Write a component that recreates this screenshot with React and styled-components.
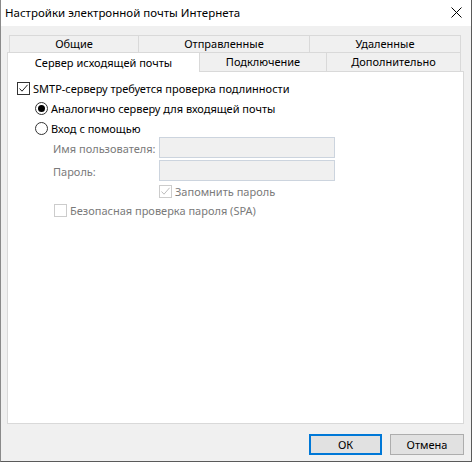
import React from "react";
import styled, { createGlobalStyle } from "styled-components";

const Global = createGlobalStyle`
  html, body {
    margin: 0;
    padding: 0;
    background: #ffffff;
  }
  * {
    box-sizing: border-box;
  }
`;

const Window = styled.div`
  width: 472px;
  height: 462px;
  display: flex;
  flex-direction: column;
  background: #f0f0f0;
  border-left: 1px solid #8a8a8a;
  border-right: 1px solid #5a5a5a;
  border-bottom: 1px solid #5a5a5a;
  font-family: "Noto Sans", "Open Sans", sans-serif;
  font-size: 11px;
  color: #000;
`;

const TitleBar = styled.div`
  height: 26px;
  flex: none;
  display: flex;
  align-items: center;
  justify-content: space-between;
  background: #ffffff;
  padding: 0 0 1px 4px;
`;

const Title = styled.span`
  font-size: 11.5px;
`;

const CloseButton = styled.div`
  width: 46px;
  height: 26px;
  display: flex;
  align-items: center;
  justify-content: center;
  margin-right: -8px;
`;

const Body = styled.div`
  flex: 1;
  display: flex;
  flex-direction: column;
  padding: 9px 7px 7px 6px;
`;

const TabRow = styled.div`
  display: flex;
  margin-left: ${(p) => p.$indent || 0}px;
  position: relative;
  z-index: ${(p) => (p.$front ? 2 : 1)};
`;

const Tab = styled.div`
  width: ${(p) => p.$w}px;
  height: ${(p) => p.$h}px;
  display: flex;
  align-items: center;
  justify-content: center;
  background: ${(p) => (p.$active ? "#ffffff" : "#f0f0f0")};
  border-top: 1px solid #d9d9d9;
  border-left: ${(p) => (p.$noLeft ? "none" : "1px solid #d9d9d9")};
  border-right: ${(p) => (p.$right ? "1px solid #d9d9d9" : "none")};
  margin-bottom: ${(p) => (p.$active ? "-1px" : "0")};
  padding-bottom: 1px;
  white-space: nowrap;
`;

const Panel = styled.div`
  width: 457px;
  height: 353px;
  background: #ffffff;
  border: 1px solid #d9d9d9;
  padding: 6px 0 0 9px;
  display: flex;
  flex-direction: column;
`;

const Row = styled.div`
  height: ${(p) => p.$h || 20}px;
  display: flex;
  align-items: center;
  margin-left: ${(p) => p.$indent || 0}px;
  color: ${(p) => (p.$disabled ? "#7a7a7a" : "#000")};
  white-space: nowrap;
`;

const Box = styled.span`
  width: 13px;
  height: 13px;
  flex: none;
  display: inline-flex;
  align-items: center;
  justify-content: center;
  background: #ffffff;
  border: 1px solid ${(p) => (p.$disabled ? "#cccccc" : "#333333")};
  margin-right: ${(p) => p.$gap || 3}px;
`;

const Radio = styled.span`
  width: 13px;
  height: 13px;
  flex: none;
  border-radius: 50%;
  display: inline-flex;
  align-items: center;
  justify-content: center;
  background: #ffffff;
  border: 1px solid #333333;
  margin-right: 3px;

  &::after {
    content: "";
    width: 7px;
    height: 7px;
    border-radius: 50%;
    background: ${(p) => (p.$checked ? "#000" : "transparent")};
  }
`;

const Fields = styled.div`
  display: grid;
  grid-template-columns: 106px 176px;
  grid-auto-rows: 21px;
  row-gap: 2px;
  margin-left: 36px;
  margin-top: -1px;
  align-items: center;
`;

const Label = styled.span`
  color: #7a7a7a;
  padding-top: 1px;
  white-space: nowrap;
`;

const Input = styled.div`
  height: 21px;
  background: #f0f0f0;
  border: 1px solid #ccd4de;
`;

const Footer = styled.div`
  display: flex;
  justify-content: flex-end;
  gap: 8px;
  margin-top: 10px;
`;

const Button = styled.div`
  width: ${(p) => p.$w}px;
  height: 21px;
  display: flex;
  align-items: center;
  justify-content: center;
  background: #e1e1e1;
  border: ${(p) => (p.$default ? "2px solid #0078d7" : "1px solid #adadad")};
  padding-bottom: 1px;
`;

const Check = ({ color }) => (
  <svg width="11" height="11" viewBox="0 0 11 11">
    <path d="M1.5 5.5 L4 8.2 L9.6 1.8" fill="none" stroke={color} strokeWidth="1" />
  </svg>
);

export default function App() {
  return (
    <>
      <Global />
      <Window>
        <TitleBar>
          <Title>Настройки электронной почты Интернета</Title>
          <CloseButton>
            <svg width="11" height="11" viewBox="0 0 11 11">
              <path d="M0.5 0.5 L10.5 10.5 M10.5 0.5 L0.5 10.5" stroke="#000" strokeWidth="1" />
            </svg>
          </CloseButton>
        </TitleBar>
        <Body>
          <TabRow $indent={2}>
            <Tab $w={129} $h={17}>Общие</Tab>
            <Tab $w={171} $h={17}>Отправленные</Tab>
            <Tab $w={152} $h={17} $right>Удаленные</Tab>
          </TabRow>
          <TabRow $front>
            <Tab $w={193} $h={20} $active $right>Сервер исходящей почты</Tab>
            <Tab $w={127} $h={19} $noLeft $right>Подключение</Tab>
            <Tab $w={134} $h={19} $noLeft $right>Дополнительно</Tab>
          </TabRow>
          <Panel>
            <Row>
              <Box><Check color="#222" /></Box>
              SMTP-серверу требуется проверка подлинности
            </Row>
            <Row $indent={18}>
              <Radio $checked />
              Аналогично серверу для входящей почты
            </Row>
            <Row $indent={18}>
              <Radio />
              Вход с помощью
            </Row>
            <Fields>
              <Label>Имя пользователя:</Label>
              <Input />
              <Label>Пароль:</Label>
              <Input />
            </Fields>
            <Row $indent={142} $disabled $h={20}>
              <Box $disabled><Check color="#bdbdbd" /></Box>
              Запомнить пароль
            </Row>
            <Row $indent={37} $disabled $h={18}>
              <Box $disabled />
              Безопасная проверка пароля (SPA)
            </Row>
          </Panel>
          <Footer>
            <Button $w={73} $default>ОК</Button>
            <Button $w={74}>Отмена</Button>
          </Footer>
        </Body>
      </Window>
    </>
  );
}
